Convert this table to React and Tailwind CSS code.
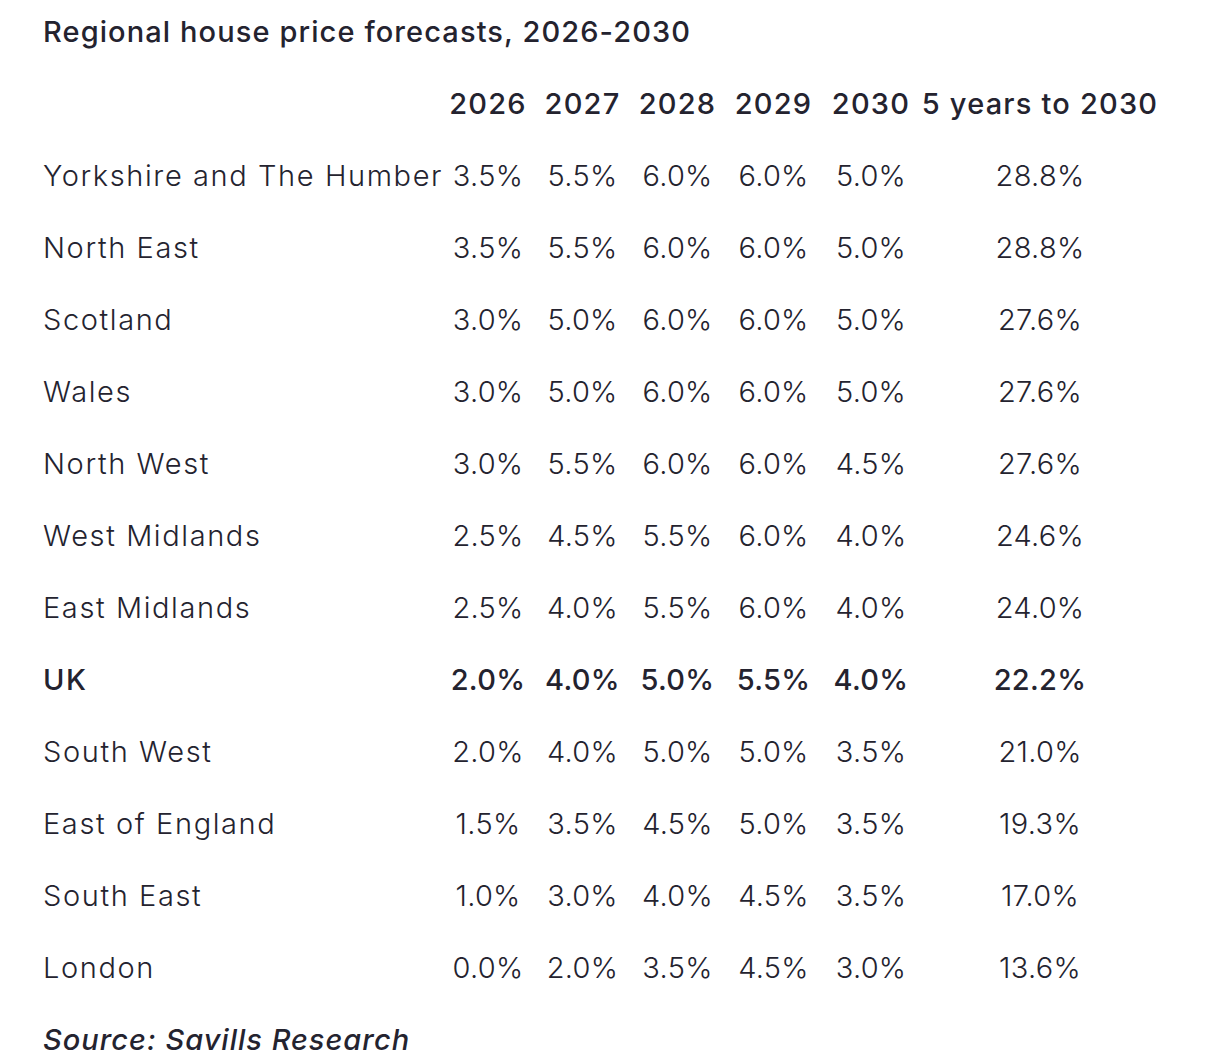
import React from 'react';

const rows = [
  ['Yorkshire and The Humber', '3.5%', '5.5%', '6.0%', '6.0%', '5.0%', '28.8%'],
  ['North East', '3.5%', '5.5%', '6.0%', '6.0%', '5.0%', '28.8%'],
  ['Scotland', '3.0%', '5.0%', '6.0%', '6.0%', '5.0%', '27.6%'],
  ['Wales', '3.0%', '5.0%', '6.0%', '6.0%', '5.0%', '27.6%'],
  ['North West', '3.0%', '5.5%', '6.0%', '6.0%', '4.5%', '27.6%'],
  ['West Midlands', '2.5%', '4.5%', '5.5%', '6.0%', '4.0%', '24.6%'],
  ['East Midlands', '2.5%', '4.0%', '5.5%', '6.0%', '4.0%', '24.0%'],
  ['UK', '2.0%', '4.0%', '5.0%', '5.5%', '4.0%', '22.2%', true],
  ['South West', '2.0%', '4.0%', '5.0%', '5.0%', '3.5%', '21.0%'],
  ['East of England', '1.5%', '3.5%', '4.5%', '5.0%', '3.5%', '19.3%'],
  ['South East', '1.0%', '3.0%', '4.0%', '4.5%', '3.5%', '17.0%'],
  ['London', '0.0%', '2.0%', '3.5%', '4.5%', '3.0%', '13.6%'],
];

const headers = ['2026', '2027', '2028', '2029', '2030', '5 years to 2030'];

const grid = 'grid grid-cols-[398px_94px_95px_95px_97px_98px_240px] items-center h-[72px]';

export default function App() {
  return (
    <div className="min-h-screen bg-white pl-[43px] text-[#24232f] text-[29px] font-['Inter',sans-serif]">
      {/* Title */}
      <div className="h-[64px] flex items-center font-medium tracking-[1.1px]">
        Regional house price forecasts, 2026-2030
      </div>

      {/* Header */}
      <div className={`${grid} mt-[4px] font-medium tracking-[1.2px]`}>
        <div />
        {headers.map((h) => (
          <div key={h} className="text-center whitespace-nowrap">{h}</div>
        ))}
      </div>

      {/* Rows */}
      {rows.map((r) => (
        <div key={r[0]} className={`${grid} ${r[7] ? 'font-medium' : 'font-light'}`}>
          <div className="whitespace-nowrap tracking-[1.6px]">{r[0]}</div>
          {r.slice(1, 7).map((v, i) => (
            <div key={i} className="text-center whitespace-nowrap tracking-[0.3px]">{v}</div>
          ))}
        </div>
      ))}

      {/* Source */}
      <div className="h-[72px] flex items-center italic font-medium tracking-[1px]">
        Source: Savills Research
      </div>
    </div>
  );
}
